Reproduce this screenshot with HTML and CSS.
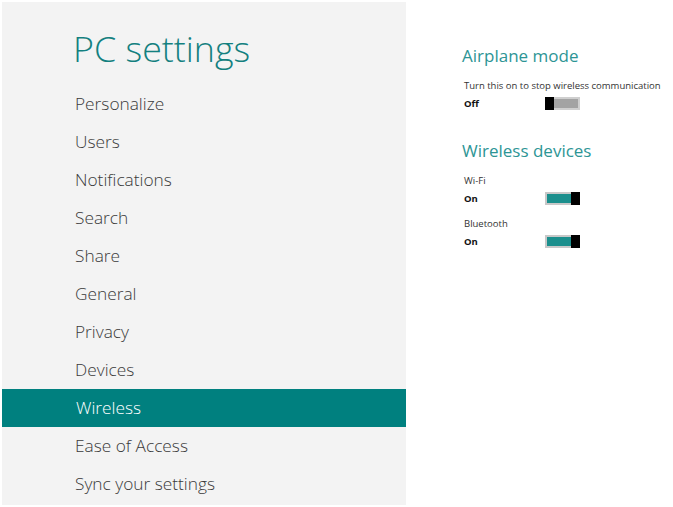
FILE: index.html
```html
<!DOCTYPE html>
<html>
<head>
<meta charset="utf-8">
<link rel="stylesheet" href="styles.css">
</head>
<body>
<div class="screen">
  <nav class="panel">
    <h1 class="title">PC settings</h1>
    <ul class="menu">
      <li class="item">Personalize</li>
      <li class="item">Users</li>
      <li class="item">Notifications</li>
      <li class="item">Search</li>
      <li class="item">Share</li>
      <li class="item">General</li>
      <li class="item">Privacy</li>
      <li class="item">Devices</li>
      <li class="item active">Wireless</li>
      <li class="item">Ease of Access</li>
      <li class="item">Sync your settings</li>
    </ul>
  </nav>
  <main class="content">
    <section class="group">
      <h2 class="heading">Airplane mode</h2>
      <div class="setting">
        <div class="label">Turn this on to stop wireless communication</div>
        <div class="row">
          <span class="state">Off</span>
          <span class="toggle off"><span class="thumb"></span><span class="track"></span></span>
        </div>
      </div>
    </section>
    <section class="group">
      <h2 class="heading">Wireless devices</h2>
      <div class="setting">
        <div class="label">Wi-Fi</div>
        <div class="row">
          <span class="state">On</span>
          <span class="toggle on"><span class="track"></span><span class="thumb"></span></span>
        </div>
      </div>
      <div class="setting">
        <div class="label">Bluetooth</div>
        <div class="row">
          <span class="state">On</span>
          <span class="toggle on"><span class="track"></span><span class="thumb"></span></span>
        </div>
      </div>
    </section>
  </main>
</div>
</body>
</html>
```

FILE: styles.css
```css
html, body {
  margin: 0;
  padding: 0;
  background: #ffffff;
}
body {
  font-family: "Open Sans", "Noto Sans", sans-serif;
  width: 673px;
  height: 507px;
  overflow: hidden;
}
.screen {
  display: flex;
  height: 507px;
}
.panel {
  flex: none;
  margin: 2px 0 2px 2px;
  width: 404px;
  height: 503px;
  background: #f3f3f3;
  display: flex;
  flex-direction: column;
}
.title {
  margin: 0;
  height: 83px;
  box-sizing: border-box;
  padding: 22px 0 0 71px;
  font-weight: 300;
  font-size: 35.8px;
  line-height: 48px;
  color: #13807f;
  letter-spacing: 0;
}
.menu {
  list-style: none;
  margin: 0;
  padding: 0;
}
.item {
  height: 38px;
  line-height: 38px;
  padding-left: 73px;
  font-size: 17.3px;
  font-weight: 300;
  color: #3a3a3a;
}
.item.active {
  background: #00807f;
  color: #ffffff;
  padding-left: 74px;
}
.content {
  flex: none;
  padding: 41px 0 0 56px;
  display: flex;
  flex-direction: column;
}
.group {
  margin-bottom: 24px;
}
.heading {
  margin: 0;
  font-size: 17px;
  font-weight: 400;
  line-height: 30px;
  color: #2d9595;
}
.setting {
  margin-top: 7px;
  padding-left: 2px;
}
.group .setting + .setting {
  margin-top: 9px;
}
.label {
  font-size: 9.5px;
  line-height: 16px;
  color: #333333;
  white-space: nowrap;
}
.row {
  display: flex;
  align-items: center;
  height: 18px;
}
.state {
  width: 81px;
  font-size: 9.5px;
  font-weight: 700;
  color: #111111;
}
.toggle {
  display: flex;
  width: 35px;
  height: 13px;
  box-sizing: border-box;
}
.toggle .thumb {
  width: 9px;
  height: 13px;
  background: #000000;
  flex: none;
}
.toggle .track {
  flex: 1;
  height: 13px;
  box-sizing: border-box;
  border: 2px solid #d6d6d6;
}
.toggle.off .track {
  background: #a3a3a3;
  border-color: #cfcfcf;
  border-left: none;
}
.toggle.on .track {
  background: #1b8f8d;
  border-color: #c8c8c8;
  border-right: none;
}
```
